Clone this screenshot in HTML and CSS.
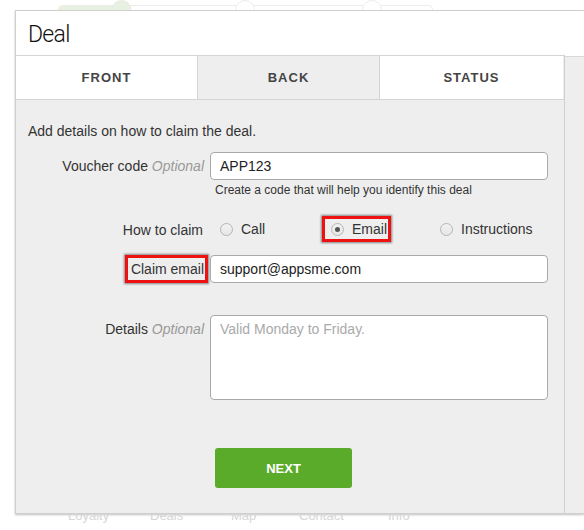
FILE: index.html
```html
<!DOCTYPE html>
<html>
<head>
<meta charset="utf-8">
<link rel="stylesheet" href="styles.css">
</head>
<body>
<div class="progress">
  <svg width="584" height="10" viewBox="0 0 584 10">
    <rect x="58.5" y="5.5" width="374" height="12" rx="4" fill="#fff" stroke="#ececec"/>
    <rect x="59" y="6" width="60" height="11" fill="#e8f0e2"/>
    <circle cx="121.5" cy="10" r="9.5" fill="#e8f0e2" stroke="#e5eddf"/>
    <circle cx="245" cy="10" r="9.5" fill="#fff" stroke="#ececec"/>
    <circle cx="372" cy="10" r="9.5" fill="#fff" stroke="#ececec"/>
  </svg>
</div>
<div class="panel">
  <div class="panel-title">Deal</div>
  <div class="panel-body">
    <div class="main">
      <div class="tabs">
        <div class="tab">FRONT</div>
        <div class="tab tab-active">BACK</div>
        <div class="tab">STATUS</div>
      </div>
      <div class="content">
        <p class="intro">Add details on how to claim the deal.</p>
        <div class="form">
          <div class="label label-input">Voucher code <em>Optional</em></div>
          <div class="control">
            <div class="input">APP123</div>
            <div class="help">Create a code that will help you identify this deal</div>
          </div>

          <div class="label label-radio">How to claim</div>
          <div class="control radios">
            <div class="option"><span class="radio"></span>Call</div>
            <div class="option highlight"><span class="radio radio-on"></span>Email</div>
            <div class="option"><span class="radio"></span>Instructions</div>
          </div>

          <div class="label label-email"><span class="highlight highlight-label">Claim email</span></div>
          <div class="control">
            <div class="input">support@appsme.com</div>
          </div>

          <div class="label label-details">Details <em>Optional</em></div>
          <div class="control">
            <div class="textarea">Valid Monday to Friday.</div>
          </div>

          <div class="label"></div>
          <div class="control">
            <button class="next">NEXT</button>
          </div>
        </div>
      </div>
    </div>
    <div class="side"></div>
  </div>
</div>
<div class="bottom-nav">
  <div class="bottom-nav-inner">
    <span>Loyalty</span>
    <span>Deals</span>
    <span>Map</span>
    <span>Contact</span>
    <span>Info</span>
  </div>
</div>
</body>
</html>
```

FILE: styles.css
```css
* { box-sizing: border-box; }

html, body {
  margin: 0;
  padding: 0;
  background: #fff;
  font-family: "Liberation Sans", Arial, sans-serif;
  color: #333;
  overflow: hidden;
}

.progress {
  height: 10px;
  overflow: hidden;
}
.progress svg { display: block; }

.panel {
  margin-left: 15px;
  border: 1px solid #cfcfcf;
  border-right: none;
  box-shadow: 0 1px 2px rgba(0,0,0,0.25);
  background: #fff;
}

.panel-title {
  height: 44px;
  display: flex;
  align-items: center;
  padding-left: 12px;
  padding-top: 2px;
  font-family: Roboto, "Liberation Sans", sans-serif;
  font-weight: 300;
  font-size: 23px;
  letter-spacing: -0.7px;
  color: #111;
}

.panel-body {
  display: flex;
}

.main {
  width: 549px;
  border-right: 1px solid #cfcfcf;
  background: #eee;
}

.side {
  flex: 1;
  margin-top: 1px;
  border-top: 1px solid #d8d8d8;
  background: #eee;
}

.tabs {
  display: flex;
  height: 45px;
  border-top: 1px solid #d4d4d4;
  border-bottom: 1px solid #d4d4d4;
}
.tab {
  flex: 0 0 auto;
  display: flex;
  align-items: center;
  justify-content: center;
  background: #fff;
  font-weight: bold;
  font-size: 13px;
  letter-spacing: 1px;
  color: #444;
}
.tab:nth-child(1) { width: 181px; }
.tab:nth-child(2) { width: 183px; border-left: 1px solid #d4d4d4; border-right: 1px solid #d4d4d4; }
.tab:nth-child(3) { width: 183px; }
.tab-active { background: #eee; }

.content {
  padding: 22px 0 25px 12px;
  font-size: 14px;
}

.intro {
  margin: 0;
  line-height: 18px;
  color: #333;
}

.form {
  display: grid;
  grid-template-columns: 176px 338px;
  column-gap: 6px;
  margin-top: 12px;
}

.label {
  text-align: right;
  color: #333;
  line-height: 18px;
}
.label em {
  color: #999;
  font-style: italic;
}
.label-input { padding-top: 5px; }
.label-radio { margin-top: 18px; padding-top: 5px; padding-right: 1px; }
.label-email { margin-top: 13px; }
.label-details { margin-top: 32px; padding-top: 5px; }

.input {
  height: 28px;
  border: 1px solid #aaa;
  border-radius: 4px;
  background: #fff;
  padding-left: 9px;
  line-height: 26px;
  color: #222;
}
.help {
  margin-top: 2px;
  padding-left: 5px;
  font-size: 12px;
  line-height: 16px;
  color: #333;
}

.radios {
  margin-top: 18px;
  display: grid;
  grid-template-columns: 112px 108px auto;
  height: 26px;
}
.option {
  display: flex;
  align-items: center;
  padding-left: 10px;
  color: #333;
}
.radio {
  width: 13px;
  height: 13px;
  border-radius: 50%;
  border: 1px solid #b5b5b5;
  background: linear-gradient(#f2f2f2, #e6e6e6);
  margin-right: 8px;
  position: relative;
  flex: 0 0 auto;
}
.radio-on::after {
  content: "";
  position: absolute;
  left: 3px;
  top: 3px;
  width: 5px;
  height: 5px;
  border-radius: 50%;
  background: #555;
}

.highlight {
  border: 3px solid #ee1111;
  box-shadow: 0 0 2px 1px rgba(0,0,0,0.45);
}
.option.highlight {
  justify-self: start;
  padding: 0 1px 0 6px;
  height: 26px;
}
.highlight-label {
  display: inline-block;
  height: 28px;
  line-height: 22px;
  padding: 0 1px 0 3px;
  margin-right: -4px;
}

.label-email + .control { margin-top: 13px; }
.label-details + .control { margin-top: 32px; }

.textarea {
  height: 85px;
  border: 1px solid #aaa;
  border-radius: 4px;
  background: #fff;
  padding: 4px 9px;
  line-height: 18px;
  color: #aaa;
}

.next {
  margin-top: 48px;
  margin-left: 5px;
  width: 137px;
  height: 40px;
  border: none;
  border-radius: 3px;
  background: #5aab29;
  color: #fff;
  font-family: "Liberation Sans", Arial, sans-serif;
  font-weight: bold;
  font-size: 13px;
  padding: 0;
  display: block;
}

.bottom-nav {
  height: 17px;
  overflow: hidden;
}
.bottom-nav-inner {
  margin-top: -7px;
  padding-left: 68px;
  display: grid;
  grid-template-columns: 82px 81px 68px 89px auto;
  font-size: 13px;
  line-height: 18px;
  color: #d6d6d6;
}
```
